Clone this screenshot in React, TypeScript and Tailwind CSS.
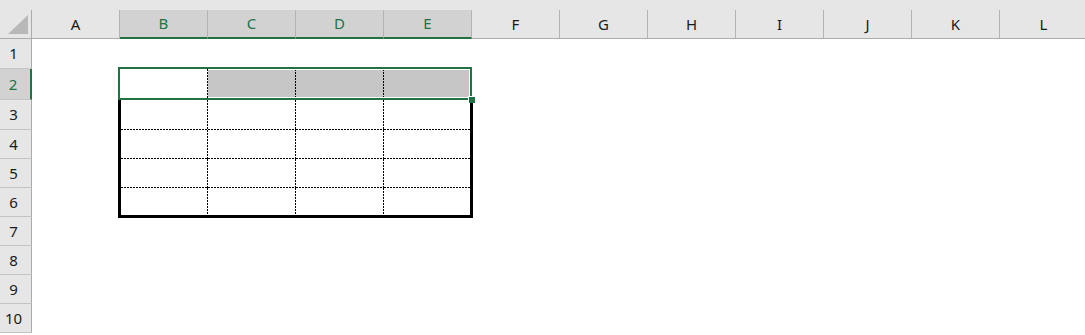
import React from 'react';

const COLS = ['A', 'B', 'C', 'D', 'E', 'F', 'G', 'H', 'I', 'J', 'K', 'L'];
const SELECTED_COLS = ['B', 'C', 'D', 'E'];

// row heights in px, gridline included (last pixel)
const ROWS = [
  { n: 1, h: 'h-[30px]' },
  { n: 2, h: 'h-[31px]' },
  { n: 3, h: 'h-[30px]' },
  { n: 4, h: 'h-[29px]' },
  { n: 5, h: 'h-[29px]' },
  { n: 6, h: 'h-[29px]' },
  { n: 7, h: 'h-[29px]' },
  { n: 8, h: 'h-[29px]' },
  { n: 9, h: 'h-[29px]' },
  { n: 10, h: 'h-[29px]' },
];

// dotted cell edges drawn as 1px repeating gradients (2 on, 1 off)
const DOT_R =
  '[background-image:repeating-linear-gradient(to_bottom,#000_0_2px,transparent_2px_3px)] [background-size:1px_100%] [background-position:right_top] [background-repeat:no-repeat]';
const DOT_B =
  '[background-image:repeating-linear-gradient(to_right,#000_0_2px,transparent_2px_3px)] [background-size:100%_1px] [background-position:left_bottom] [background-repeat:no-repeat]';
const DOT_RB =
  '[background-image:repeating-linear-gradient(to_bottom,#000_0_2px,transparent_2px_3px),repeating-linear-gradient(to_right,#000_0_2px,transparent_2px_3px)] [background-size:1px_100%,100%_1px] [background-position:right_top,left_bottom] [background-repeat:no-repeat]';

const ColumnHeader: React.FC<{ label: string }> = ({ label }) => {
  const selected = SELECTED_COLS.includes(label);
  return (
    <div
      className={
        selected
          ? 'w-[88px] shrink-0 h-full flex items-center justify-center bg-[#d2d2d2] border-r border-r-[#b4b4b4] border-b-2 border-b-[#217346] text-[#217346]'
          : 'w-[88px] shrink-0 h-full flex items-center justify-center border-r border-r-[#b4b4b4] border-b border-b-[#ababab] text-[#1a1a1a]'
      }
    >
      {label}
    </div>
  );
};

const RowHeader: React.FC<{ n: number; h: string }> = ({ n, h }) => {
  const selected = n === 2;
  return (
    <div
      className={`${h} ${
        selected
          ? 'bg-[#d2d2d2] border-r-2 border-r-[#217346] text-[#217346]'
          : 'border-r border-r-[#ababab] text-[#1a1a1a]'
      } flex items-center justify-center pr-1 border-b border-b-[#c4c4c4]`}
    >
      {n}
    </div>
  );
};

// body cells of B3:E6, index 0..15
const bodyCell = (i: number) => {
  const col = i % 4;
  const row = Math.floor(i / 4);
  const lastCol = col === 3;
  const lastRow = row === 3;
  if (lastCol && lastRow) return '';
  if (lastCol) return DOT_B;
  if (lastRow) return DOT_R;
  return DOT_RB;
};

const App: React.FC = () => {
  return (
    <div className="w-[1085px] h-[335px] overflow-hidden bg-white font-['Noto_Sans',sans-serif] text-[15px] leading-none">
      <div className="h-[10px] bg-[#e6e6e6]" />

      {/* column headers */}
      <div className="flex h-[29px] bg-[#e6e6e6]">
        <div className="w-[32px] shrink-0 h-full border-r border-r-[#ababab] border-b border-b-[#ababab]">
          <svg width="31" height="28" viewBox="0 0 31 28">
            <polygon points="28,5 28,24 8,24" fill="#b8b8b8" />
          </svg>
        </div>
        {COLS.map(c => <ColumnHeader key={c} label={c} />)}
      </div>

      <div className="flex">
        {/* row headers */}
        <div className="w-[32px] shrink-0 flex flex-col bg-[#e6e6e6]">
          {ROWS.map(r => <RowHeader key={r.n} n={r.n} h={r.h} />)}
        </div>

        {/* sheet */}
        <div className="grid grid-cols-[repeat(12,88px)] grid-rows-[30px_31px_30px_29px_29px_29px_29px_29px_29px_29px]">
          {/* B2:E2 selection */}
          <div className="relative z-10 col-start-2 col-span-4 row-start-2 -ml-[2px] -mt-[2px] border-2 border-[#217346] grid grid-cols-[88px_88px_88px_1fr] bg-white">
            <div className={`bg-white ${DOT_R}`} />
            <div className={`bg-[#c6c6c6] ${DOT_R} shadow-[inset_0_1px_0_#fff,inset_0_-1px_0_#fff]`} />
            <div className={`bg-[#c6c6c6] ${DOT_R} shadow-[inset_0_1px_0_#fff,inset_0_-1px_0_#fff]`} />
            <div className="bg-[#c6c6c6] shadow-[inset_0_1px_0_#fff,inset_0_-1px_0_#fff,inset_-1px_0_0_#fff]" />
            <div className="absolute -right-[5px] -bottom-[5px] w-[7px] h-[7px] bg-[#217346] border-l border-t border-white" />
          </div>

          {/* B3:E6 body */}
          <div className="col-start-2 col-span-4 row-start-3 row-span-4 -ml-[2px] -mr-px -mb-px border-[3px] border-t-0 border-black grid grid-cols-[87px_88px_88px_1fr] grid-rows-[30px_29px_29px_1fr]">
            {Array.from({ length: 16 }).map((_, i) => (
              <div key={i} className={bodyCell(i)} />
            ))}
          </div>
        </div>
      </div>
    </div>
  );
};

export default App;
